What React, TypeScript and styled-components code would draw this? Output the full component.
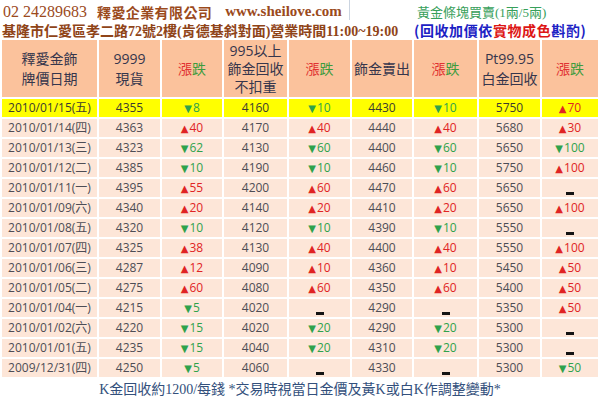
import React from 'react';
import styled, { createGlobalStyle } from 'styled-components';

const GlobalStyle = createGlobalStyle`
  html, body {
    margin: 0;
    padding: 0;
    background: #ffffff;
    overflow: hidden;
  }
`;

const Page = styled.div`
  width: 600px;
  height: 401px;
  overflow: hidden;
  font-family: 'Open Sans', 'Noto Sans CJK TC', sans-serif;
`;

const TopBar = styled.div`
  display: flex;
  height: 20px;
`;

const ContactCell = styled.div`
  width: 350px;
  box-sizing: border-box;
  display: flex;
  align-items: center;
  padding: 3px 0 0 3px;
  border-right: 1px solid #cbd4e0;
  color: #9b4a1c;
  white-space: nowrap;
`;

const Phone = styled.span`
  font-family: 'Liberation Serif', serif;
  font-size: 16px;
`;

const Company = styled.span`
  margin-left: 10px;
  font-family: 'Noto Sans CJK TC', sans-serif;
  font-weight: 700;
  font-size: 14px;
  letter-spacing: 0.4px;
`;

const Site = styled.span`
  margin-left: 13px;
  font-family: 'Liberation Serif', serif;
  font-weight: 700;
  font-size: 15px;
`;

const TradeCell = styled.div`
  flex: 1;
  display: flex;
  align-items: center;
  padding: 3px 0 0 67px;
  color: #37a05a;
  font-family: 'Liberation Serif', 'Noto Sans CJK TC', serif;
  font-size: 13px;
  white-space: nowrap;
`;

const AddressBar = styled.div`
  display: grid;
  grid-template-columns: 414px 186px;
  align-items: center;
  height: 18px;
  white-space: nowrap;
`;

const Address = styled.div`
  padding-left: 2px;
  color: #8f4418;
  font-family: 'Liberation Serif', 'Noto Sans CJK TC', serif;
  font-weight: 700;
  font-size: 14px;
`;

const Notice = styled.div`
  color: #1c22c4;
  font-family: 'Noto Sans CJK TC', sans-serif;
  font-weight: 700;
  font-size: 14px;
  letter-spacing: 0.6px;
`;

const Red = styled.span`
  color: #dd1515;
`;

const PriceTable = styled.table`
  width: 600px;
  table-layout: fixed;
  border-collapse: separate;
  border-spacing: 2px;
`;

const HeadCell = styled.th<{ $compact?: boolean }>`
  height: 57px;
  padding: 0;
  background: #fbc29c;
  color: #36364c;
  font-family: 'Open Sans', 'Noto Sans CJK TC', sans-serif;
  font-weight: 400;
  font-size: 14px;
  line-height: ${(p) => (p.$compact ? '18px' : '20px')};
  text-align: center;
  vertical-align: middle;
`;

const Rise = styled.span`
  color: #e13232;
`;

const Fall = styled.span`
  color: #3d9c3d;
`;

const Row = styled.tr<{ $highlight?: boolean }>`
  td {
    background: ${(p) => (p.$highlight ? '#ffff00' : '#fde6d8')};
    color: ${(p) => (p.$highlight ? '#3c3c30' : '#4d4d55')};
  }
`;

const Cell = styled.td`
  height: 18px;
  padding: 0;
  font-size: 12px;
  line-height: 14px;
  text-align: center;
  vertical-align: middle;
  white-space: nowrap;
`;

const Delta = styled.span<{ $up: boolean }>`
  color: ${(p) => (p.$up ? '#e02424' : '#2fa24c')};
`;

const Arrow = styled.span`
  font-family: 'DejaVu Sans', sans-serif;
  font-size: 10px;
  line-height: 10px;
  margin-right: 1px;
`;

const Dash = styled.span`
  display: inline-block;
  width: 8px;
  height: 3px;
  background: #151515;
  vertical-align: -3px;
`;

const Footer = styled.div`
  height: 22px;
  line-height: 22px;
  text-align: center;
  color: #33507c;
  font-family: 'Liberation Serif', 'Noto Sans CJK TC', serif;
  font-size: 14px;
  white-space: nowrap;
`;

type Quote = {
  date: string;
  pure: number;
  pureChg: number;
  recycle: number;
  recycleChg: number;
  sell: number;
  sellChg: number;
  platinum: number;
  platinumChg: number;
};

const q = (date: string, ...n: number[]): Quote => ({
  date,
  pure: n[0],
  pureChg: n[1],
  recycle: n[2],
  recycleChg: n[3],
  sell: n[4],
  sellChg: n[5],
  platinum: n[6],
  platinumChg: n[7],
});

// 0 means no change (drawn as a bar)
const quotes: Quote[] = [
  q('2010/01/15(五)', 4355, -8, 4160, -10, 4430, -10, 5750, 70),
  q('2010/01/14(四)', 4363, 40, 4170, 40, 4440, 40, 5680, 30),
  q('2010/01/13(三)', 4323, -62, 4130, -60, 4400, -60, 5650, -100),
  q('2010/01/12(二)', 4385, -10, 4190, -10, 4460, -10, 5750, 100),
  q('2010/01/11(一)', 4395, 55, 4200, 60, 4470, 60, 5650, 0),
  q('2010/01/09(六)', 4340, 20, 4140, 20, 4410, 20, 5650, 100),
  q('2010/01/08(五)', 4320, -10, 4120, -10, 4390, -10, 5550, 0),
  q('2010/01/07(四)', 4325, 38, 4130, 40, 4400, 40, 5550, 100),
  q('2010/01/06(三)', 4287, 12, 4090, 10, 4360, 10, 5450, 50),
  q('2010/01/05(二)', 4275, 60, 4080, 60, 4350, 60, 5400, 50),
  q('2010/01/04(一)', 4215, -5, 4020, 0, 4290, 0, 5350, 50),
  q('2010/01/02(六)', 4220, -15, 4020, -20, 4290, -20, 5300, 0),
  q('2010/01/01(五)', 4235, -15, 4040, -20, 4310, -20, 5300, 0),
  q('2009/12/31(四)', 4250, -5, 4060, 0, 4330, 0, 5300, -50),
];

const colWidths = [95, 61, 60, 63, 61, 60, 63, 61, 56];

const Change: React.FC<{ value: number }> = ({ value }) => {
  if (value === 0) return <Dash />;
  const up = value > 0;
  return (
    <Delta $up={up}>
      <Arrow>{up ? '▲' : '▼'}</Arrow>
      {Math.abs(value)}
    </Delta>
  );
};

const RiseFall = () => (
  <HeadCell>
    <Rise>漲</Rise>
    <Fall>跌</Fall>
  </HeadCell>
);

const App: React.FC = () => {
  return (
    <Page>
      <GlobalStyle />
      <TopBar>
        <ContactCell>
          <Phone>02 24289683</Phone>
          <Company>釋愛企業有限公司</Company>
          <Site>www.sheilove.com</Site>
        </ContactCell>
        <TradeCell>黃金條塊買賣(1兩/5兩)</TradeCell>
      </TopBar>
      <AddressBar>
        <Address>基隆市仁愛區孝二路72號2樓(肯德基斜對面)營業時間11:00~19:00</Address>
        <Notice>
          (回收加價依<Red>實物成色</Red>斟酌)
        </Notice>
      </AddressBar>
      <PriceTable>
        <colgroup>
          {colWidths.map((w, i) => (
            <col key={i} style={{ width: w }} />
          ))}
        </colgroup>
        <thead>
          <tr>
            <HeadCell>
              釋愛金飾
              <br />
              牌價日期
            </HeadCell>
            <HeadCell>
              9999
              <br />
              現貨
            </HeadCell>
            <RiseFall />
            <HeadCell $compact>
              995以上
              <br />
              飾金回收
              <br />
              不扣重
            </HeadCell>
            <RiseFall />
            <HeadCell>飾金賣出</HeadCell>
            <RiseFall />
            <HeadCell>
              Pt99.95
              <br />
              白金回收
            </HeadCell>
            <RiseFall />
          </tr>
        </thead>
        <tbody>
          {quotes.map((row, i) => (
            <Row key={row.date} $highlight={i === 0}>
              <Cell>{row.date}</Cell>
              <Cell>{row.pure}</Cell>
              <Cell>
                <Change value={row.pureChg} />
              </Cell>
              <Cell>{row.recycle}</Cell>
              <Cell>
                <Change value={row.recycleChg} />
              </Cell>
              <Cell>{row.sell}</Cell>
              <Cell>
                <Change value={row.sellChg} />
              </Cell>
              <Cell>{row.platinum}</Cell>
              <Cell>
                <Change value={row.platinumChg} />
              </Cell>
            </Row>
          ))}
        </tbody>
      </PriceTable>
      <Footer>K金回收約1200/每錢 *交易時視當日金價及黃K或白K作調整變動*</Footer>
    </Page>
  );
};

export default App;
